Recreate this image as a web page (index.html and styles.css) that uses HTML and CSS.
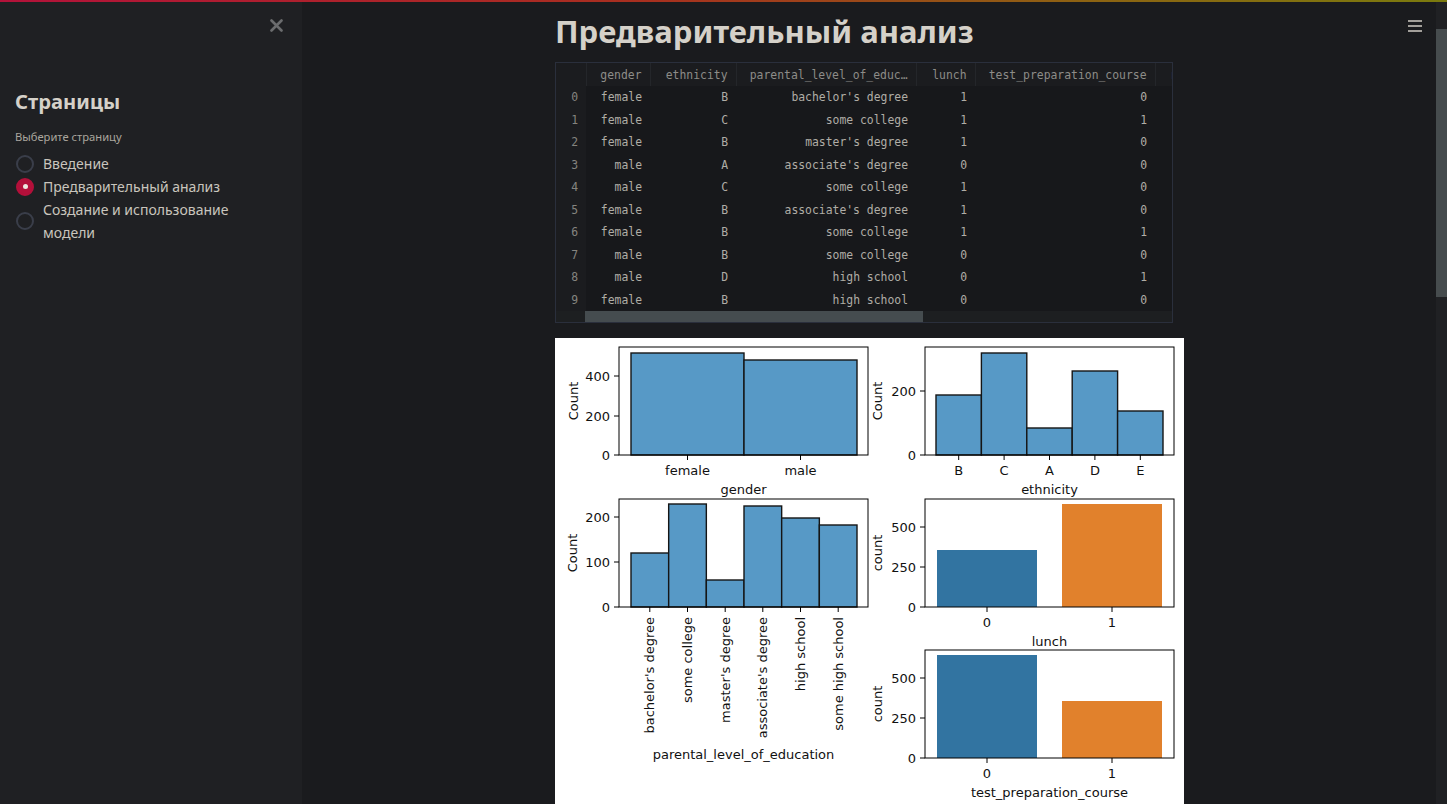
FILE: index.html
```html
<!DOCTYPE html>
<html lang="ru">
<head>
<meta charset="utf-8">
<title>Предварительный анализ</title>
<link rel="stylesheet" href="styles.css">
</head>
<body>
<div class="decoration"></div>
<div class="app">
  <aside class="sidebar">
    <div class="sidebar-head">
      <svg class="close" width="13" height="13" viewBox="0 0 13 13"><path d="M1.5 1.5 L11.5 11.5 M11.5 1.5 L1.5 11.5"/></svg>
    </div>
    <h2 class="side-title">Страницы</h2>
    <div class="radio-caption">Выберите страницу</div>
    <div class="radio-group">
      <label class="radio"><span class="dot"></span><span class="radio-text">Введение</span></label>
      <label class="radio checked"><span class="dot"></span><span class="radio-text">Предварительный анализ</span></label>
      <label class="radio"><span class="dot"></span><span class="radio-text">Создание и использование модели</span></label>
    </div>
  </aside>
  <main class="main">
    <div class="block">
      <h1 class="title">Предварительный анализ</h1>
      <div class="df">
        <table class="grid">
          <colgroup>
            <col class="c-idx"><col class="c-gender"><col class="c-eth"><col class="c-par"><col class="c-lunch"><col class="c-test"><col class="c-math">
          </colgroup>
          <thead>
            <tr><th class="idx"></th><th>gender</th><th>ethnicity</th><th>parental_level_of_educ…</th><th>lunch</th><th>test_preparation_course</th><th class="cut">m</th></tr>
          </thead>
          <tbody>
            <tr><td class="idx">0</td><td>female</td><td>B</td><td>bachelor's degree</td><td>1</td><td>0</td><td></td></tr>
            <tr><td class="idx">1</td><td>female</td><td>C</td><td>some college</td><td>1</td><td>1</td><td></td></tr>
            <tr><td class="idx">2</td><td>female</td><td>B</td><td>master's degree</td><td>1</td><td>0</td><td></td></tr>
            <tr><td class="idx">3</td><td>male</td><td>A</td><td>associate's degree</td><td>0</td><td>0</td><td></td></tr>
            <tr><td class="idx">4</td><td>male</td><td>C</td><td>some college</td><td>1</td><td>0</td><td></td></tr>
            <tr><td class="idx">5</td><td>female</td><td>B</td><td>associate's degree</td><td>1</td><td>0</td><td></td></tr>
            <tr><td class="idx">6</td><td>female</td><td>B</td><td>some college</td><td>1</td><td>1</td><td></td></tr>
            <tr><td class="idx">7</td><td>male</td><td>B</td><td>some college</td><td>0</td><td>0</td><td></td></tr>
            <tr><td class="idx">8</td><td>male</td><td>D</td><td>high school</td><td>0</td><td>1</td><td></td></tr>
            <tr><td class="idx">9</td><td>female</td><td>B</td><td>high school</td><td>0</td><td>0</td><td></td></tr>
          </tbody>
        </table>
        <div class="hscroll"><div class="hthumb"></div></div>
      </div>
      <div class="figure">
        <svg class="plots" width="629" height="470" viewBox="0 0 629 470">
          <rect x="0" y="0" width="629" height="470" fill="#ffffff"/>
          <!-- Plot 1: gender -->
          <rect class="hist" x="76" y="15" width="113" height="102"/>
          <rect class="hist" x="189" y="22" width="113" height="95"/>
          <rect class="ax" x="64" y="9" width="249" height="108"/>
          <path class="tk" d="M59 117H64M59 78H64M59 38H64M132.5 117V122M245.5 117V122"/>
          <text class="t" x="55" y="121.5" text-anchor="end">0</text>
          <text class="t" x="55" y="82.5" text-anchor="end">200</text>
          <text class="t" x="55" y="42.5" text-anchor="end">400</text>
          <text class="t" x="132.5" y="137" text-anchor="middle">female</text>
          <text class="t" x="245.5" y="137" text-anchor="middle">male</text>
          <text class="t" x="188.5" y="156" text-anchor="middle">gender</text>
          <text class="t" x="23" y="63" text-anchor="middle" transform="rotate(-90 23 63)">Count</text>
          <!-- Plot 2: ethnicity -->
          <rect class="hist" x="381" y="57" width="45.4" height="60"/>
          <rect class="hist" x="426.4" y="15" width="45.4" height="102"/>
          <rect class="hist" x="471.8" y="90" width="45.4" height="27"/>
          <rect class="hist" x="517.2" y="33" width="45.4" height="84"/>
          <rect class="hist" x="562.6" y="73" width="45.4" height="44"/>
          <rect class="ax" x="370" y="9" width="249" height="108"/>
          <path class="tk" d="M365 117H370M365 53H370M403.7 117V122M449.1 117V122M494.5 117V122M539.9 117V122M585.3 117V122"/>
          <text class="t" x="361" y="121.5" text-anchor="end">0</text>
          <text class="t" x="361" y="57.5" text-anchor="end">200</text>
          <text class="t" x="403.7" y="137" text-anchor="middle">B</text>
          <text class="t" x="449.1" y="137" text-anchor="middle">C</text>
          <text class="t" x="494.5" y="137" text-anchor="middle">A</text>
          <text class="t" x="539.9" y="137" text-anchor="middle">D</text>
          <text class="t" x="585.3" y="137" text-anchor="middle">E</text>
          <text class="t" x="494.5" y="156" text-anchor="middle">ethnicity</text>
          <text class="t" x="327" y="63" text-anchor="middle" transform="rotate(-90 327 63)">Count</text>
          <!-- Plot 3: parental level -->
          <rect class="hist" x="76" y="215" width="37.67" height="54"/>
          <rect class="hist" x="113.67" y="166" width="37.67" height="103"/>
          <rect class="hist" x="151.33" y="242" width="37.67" height="27"/>
          <rect class="hist" x="189" y="168" width="37.67" height="101"/>
          <rect class="hist" x="226.67" y="180" width="37.67" height="89"/>
          <rect class="hist" x="264.33" y="187" width="37.67" height="82"/>
          <rect class="ax" x="64" y="161" width="249" height="108"/>
          <path class="tk" d="M59 269H64M59 224H64M59 179H64M94.8 269V274M132.5 269V274M170.2 269V274M207.8 269V274M245.5 269V274M283.2 269V274"/>
          <text class="t" x="55" y="273.5" text-anchor="end">0</text>
          <text class="t" x="55" y="228.5" text-anchor="end">100</text>
          <text class="t" x="55" y="183.5" text-anchor="end">200</text>
          <text class="t" x="99.3" y="279" text-anchor="end" transform="rotate(-90 99.3 279)">bachelor's degree</text>
          <text class="t" x="137" y="279" text-anchor="end" transform="rotate(-90 137 279)">some college</text>
          <text class="t" x="174.7" y="279" text-anchor="end" transform="rotate(-90 174.7 279)">master's degree</text>
          <text class="t" x="212.3" y="279" text-anchor="end" transform="rotate(-90 212.3 279)">associate's degree</text>
          <text class="t" x="250" y="279" text-anchor="end" transform="rotate(-90 250 279)">high school</text>
          <text class="t" x="287.7" y="279" text-anchor="end" transform="rotate(-90 287.7 279)">some high school</text>
          <text class="t" x="188.5" y="421" text-anchor="middle">parental_level_of_education</text>
          <text class="t" x="22" y="215" text-anchor="middle" transform="rotate(-90 22 215)">Count</text>
          <!-- Plot 4: lunch -->
          <rect class="c0" x="382" y="212" width="100" height="57"/>
          <rect class="c1" x="507" y="166" width="100" height="103"/>
          <rect class="ax" x="370" y="161" width="249" height="108"/>
          <path class="tk" d="M365 269H370M365 229H370M365 189H370M432 269V274M557 269V274"/>
          <text class="t" x="361" y="273.5" text-anchor="end">0</text>
          <text class="t" x="361" y="233.5" text-anchor="end">250</text>
          <text class="t" x="361" y="193.5" text-anchor="end">500</text>
          <text class="t" x="432" y="289" text-anchor="middle">0</text>
          <text class="t" x="557" y="289" text-anchor="middle">1</text>
          <text class="t" x="494.5" y="308" text-anchor="middle">lunch</text>
          <text class="t" x="327" y="215" text-anchor="middle" transform="rotate(-90 327 215)">count</text>
          <!-- Plot 5: test preparation -->
          <rect class="c0" x="382" y="317" width="100" height="103"/>
          <rect class="c1" x="507" y="363" width="100" height="57"/>
          <rect class="ax" x="370" y="312" width="249" height="108"/>
          <path class="tk" d="M365 420H370M365 380H370M365 340H370M432 420V425M557 420V425"/>
          <text class="t" x="361" y="424.5" text-anchor="end">0</text>
          <text class="t" x="361" y="384.5" text-anchor="end">250</text>
          <text class="t" x="361" y="344.5" text-anchor="end">500</text>
          <text class="t" x="432" y="440" text-anchor="middle">0</text>
          <text class="t" x="557" y="440" text-anchor="middle">1</text>
          <text class="t" x="494.5" y="459" text-anchor="middle">test_preparation_course</text>
          <text class="t" x="327" y="366" text-anchor="middle" transform="rotate(-90 327 366)">count</text>
        </svg>
      </div>
    </div>
  </main>
</div>
<button class="menu" aria-label="menu">
  <svg width="14" height="12" viewBox="0 0 14 12"><path d="M0 1H14M0 6H14M0 11H14"/></svg>
</button>
<div class="vscroll"><div class="vthumb"></div></div>
</body>
</html>
```
FILE: styles.css
```css
html, body {
  margin: 0;
  height: 100%;
  overflow: hidden;
  background: #1a1b1e;
}
body {
  font-family: "Noto Sans", "DejaVu Sans", sans-serif;
  color: #d5d1c9;
}
.decoration {
  position: absolute;
  top: 0;
  left: 0;
  right: 0;
  height: 2px;
  background: linear-gradient(90deg, #b3123a 0%, #a8301f 45%, #8d6312 75%, #7b7b0e 100%);
  z-index: 10;
}
.app {
  display: flex;
  height: 100vh;
}
.sidebar {
  width: 302px;
  flex: none;
  box-sizing: border-box;
  background: #1f2023;
  padding: 19px 19px 0 15px;
}
.sidebar-head {
  display: flex;
  justify-content: flex-end;
  height: 13px;
}
.close path {
  stroke: #6b6c6e;
  stroke-width: 2.6;
  stroke-linecap: round;
  fill: none;
}
.side-title {
  margin: 55px 0 0 0;
  font-size: 20.2px;
  line-height: 28px;
  font-weight: 700;
  color: #d5d1c9;
}
.radio-caption {
  margin-top: 15px;
  font-size: 11.2px;
  line-height: 14px;
  color: #aaa69e;
}
.radio-group {
  margin-top: 8px;
  display: flex;
  flex-direction: column;
}
.radio {
  display: flex;
  align-items: center;
  gap: 9px;
  font-size: 14px;
  line-height: 23px;
  color: #c9c5bd;
  padding-left: 1px;
}
.radio-text {
  max-width: 200px;
}
.dot {
  width: 18px;
  height: 18px;
  box-sizing: border-box;
  border-radius: 50%;
  border: 2px solid #3a3e4a;
  flex: none;
  display: flex;
  align-items: center;
  justify-content: center;
}
.radio.checked .dot {
  background: #b3103a;
  border-color: #b3103a;
}
.radio.checked .dot::after {
  content: "";
  width: 5px;
  height: 5px;
  border-radius: 50%;
  background: #ece8e0;
}
.main {
  flex: 1;
  min-width: 0;
}
.block {
  width: 639px;
  margin: 0 auto;
  padding-top: 12px;
}
.title {
  margin: 0;
  font-size: 31px;
  line-height: 39px;
  font-weight: 700;
  color: #d5d1c9;
}
.df {
  margin-top: 11px;
  width: 618px;
  box-sizing: border-box;
  border: 1px solid #2a2f3c;
  overflow: hidden;
  background: #17181b;
}
.grid {
  border-collapse: collapse;
  table-layout: fixed;
  width: 617px;
  font-family: "DejaVu Sans Mono", "Liberation Mono", monospace;
  font-size: 11.4px;
}
.c-idx { width: 30px; }
.c-gender { width: 64px; }
.c-eth { width: 86px; }
.c-par { width: 180px; }
.c-lunch { width: 59px; }
.c-test { width: 180px; }
.c-math { width: 18px; }
.grid th, .grid td {
  height: 22.5px;
  padding: 0 8px 0 0;
  text-align: right;
  white-space: nowrap;
  overflow: hidden;
  font-weight: 400;
}
.grid th {
  height: 23px;
  color: #8d8c88;
  background: #1b1c1f;
  border-right: 1px solid #24262a;
}
.grid th.cut {
  text-align: left;
  padding: 0 0 0 16px;
  color: #5a5a58;
  border-right: none;
}
.grid td {
  color: #b0ada6;
}
.grid td.idx {
  color: #85847f;
  background: #1b1c1f;
}
.hscroll {
  height: 11px;
  background: #1d1f21;
  padding-left: 29px;
}
.hthumb {
  width: 338px;
  height: 100%;
  background: #454c4f;
}
.figure {
  margin-top: 15px;
  width: 629px;
}
.plots {
  display: block;
}
.plots .t {
  font-family: "DejaVu Sans", sans-serif;
  font-size: 13px;
  fill: #111111;
}
.plots .ax {
  fill: none;
  stroke: #000000;
  stroke-width: 1;
}
.plots .tk {
  stroke: #000000;
  stroke-width: 1;
  fill: none;
}
.plots .hist {
  fill: #5799c6;
  stroke: #151515;
  stroke-width: 1.4;
}
.plots .c0 { fill: #3274a1; }
.plots .c1 { fill: #e1812c; }
.menu {
  position: absolute;
  top: 14px;
  right: 19px;
  width: 26px;
  height: 24px;
  padding: 0;
  border: none;
  background: transparent;
  display: flex;
  align-items: center;
  justify-content: center;
}
.menu path {
  stroke: #cfcbc3;
  stroke-width: 1.6;
  fill: none;
}
.vscroll {
  position: absolute;
  top: 0;
  right: 0;
  width: 11px;
  height: 100%;
  background: #202124;
}
.vthumb {
  margin-top: 29px;
  height: 268px;
  background: #464c4e;
}
```
